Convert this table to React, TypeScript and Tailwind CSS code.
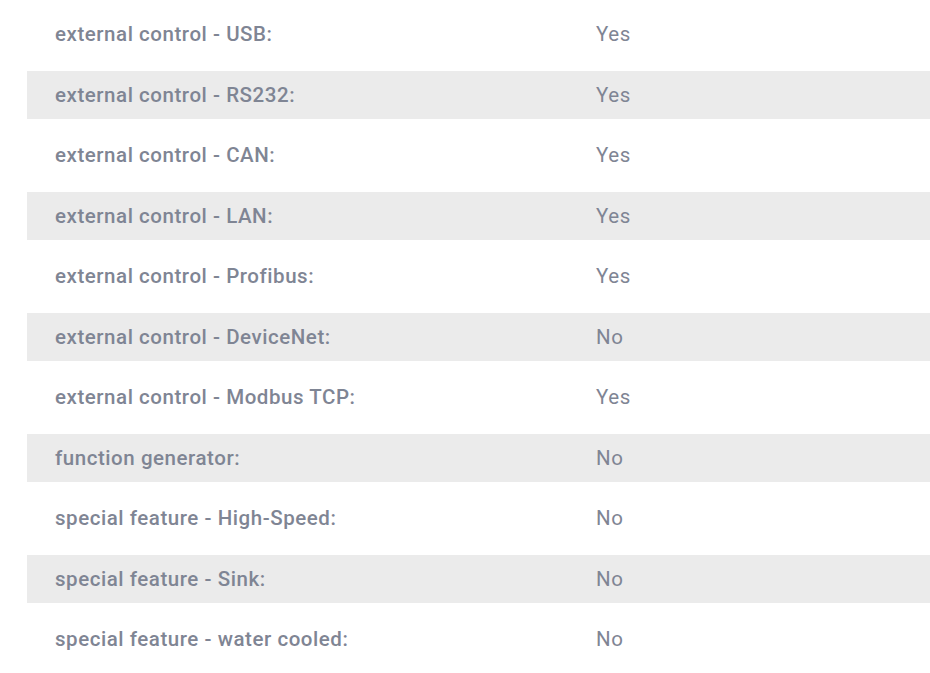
import React from 'react';

const rows: [string, string][] = [
  ['external control - USB:', 'Yes'],
  ['external control - RS232:', 'Yes'],
  ['external control - CAN:', 'Yes'],
  ['external control - LAN:', 'Yes'],
  ['external control - Profibus:', 'Yes'],
  ['external control - DeviceNet:', 'No'],
  ['external control - Modbus TCP:', 'Yes'],
  ['function generator:', 'No'],
  ['special feature - High-Speed:', 'No'],
  ['special feature - Sink:', 'No'],
  ['special feature - water cooled:', 'No'],
];

const App: React.FC = () => {
  return (
    <div className="min-h-[673px] bg-white pl-[27px] pt-[10.5px] font-['Roboto',sans-serif] text-[#7f8594]">
      <div className="flex flex-col gap-[12.5px]">
        {rows.map(([label, value], i) => (
          <div
            key={label}
            className={`flex h-[48px] items-center pl-[28px] text-[20.5px] tracking-[0.55px] ${i % 2 === 1 ? 'bg-[#ebebeb]' : 'bg-white'}`}
          >
            <div className="w-[541px] font-medium">{label}</div>
            <div className="font-normal">{value}</div>
          </div>
        ))}
      </div>
    </div>
  );
};

export default App;
